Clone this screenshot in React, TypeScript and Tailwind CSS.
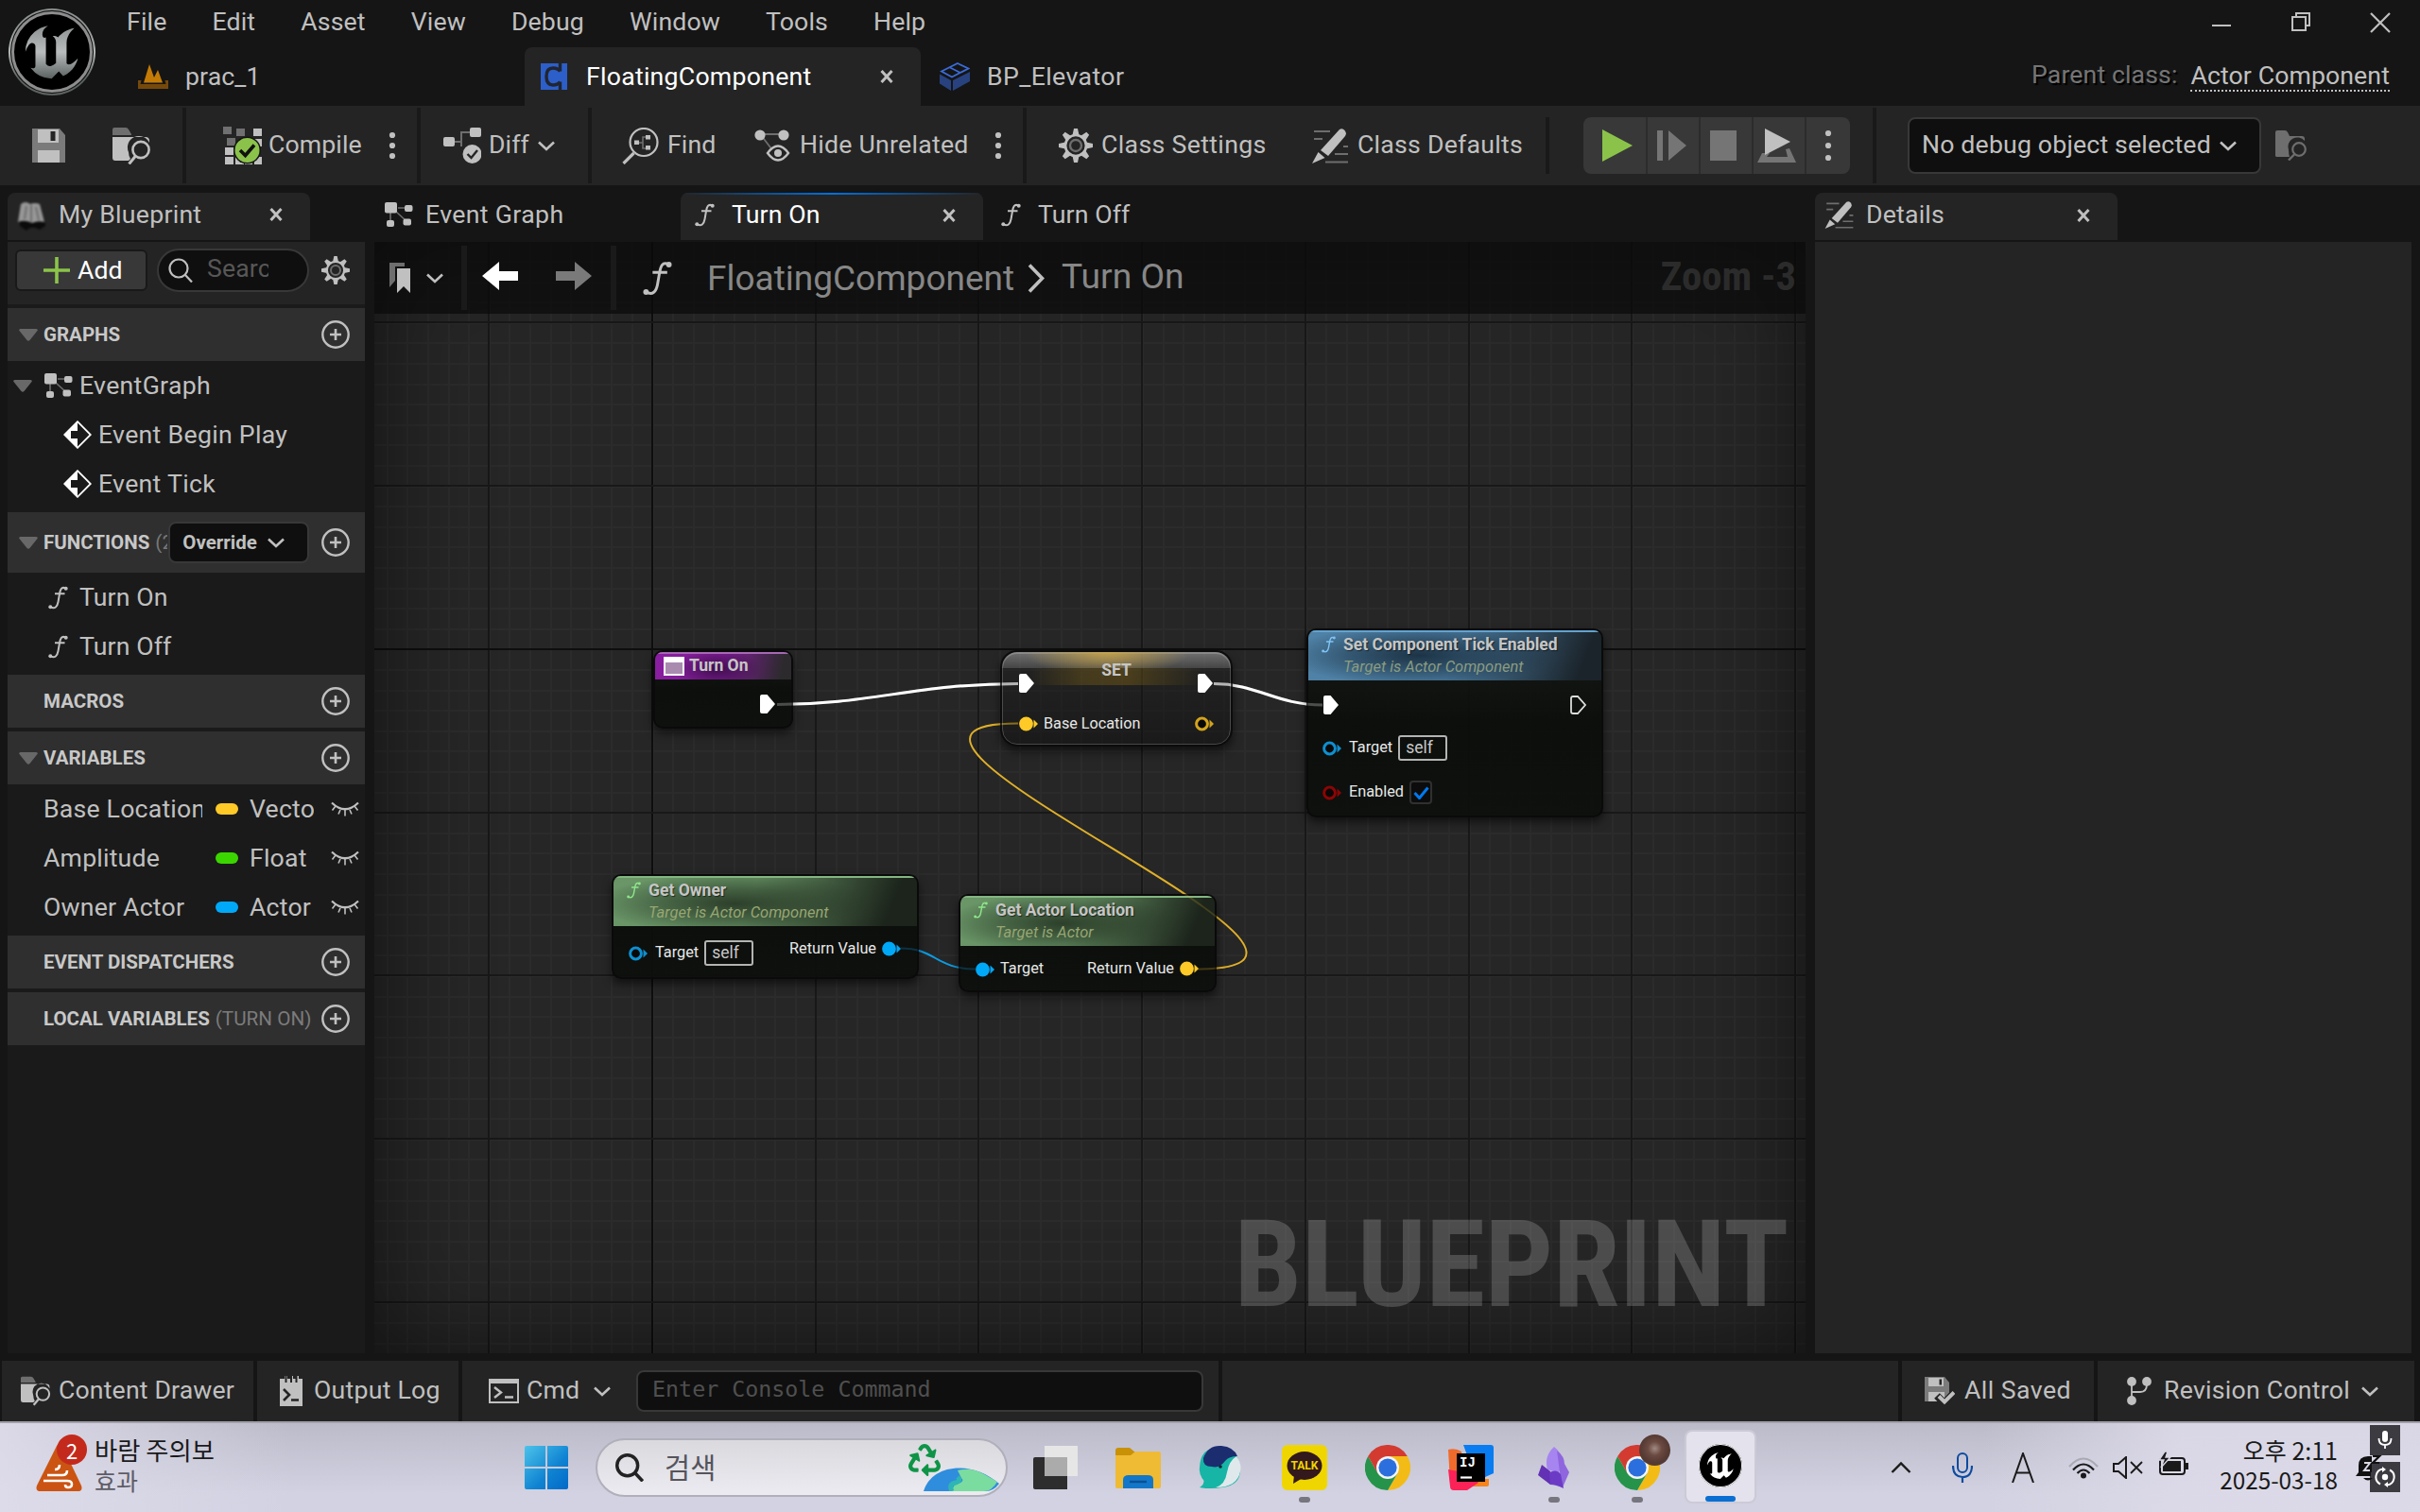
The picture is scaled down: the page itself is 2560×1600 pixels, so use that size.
import React from 'react';
import type { ReactNode } from 'react';
import { SiUnrealengine } from 'react-icons/si';
import { FaRecycle } from 'react-icons/fa';

const LIGHT = '#c0c0c0';
const DIM = '#6e6e6e';

/* ---------- icons ---------- */

type SvgProps = { w: number; h: number; className?: string; children: ReactNode; box?: string };
const Svg = ({ w, h, className, children, box }: SvgProps) => (
  <svg width={w} height={h} viewBox={box ?? `0 0 ${w} ${h}`} className={`shrink-0 ${className ?? ''}`} fill="none">
    {children}
  </svg>
);

const Chevron = ({ className }: { className?: string }) => (
  <Svg w={18} h={11} className={className}>
    <path d="M1 1.5 9 9l8-7.5" stroke={LIGHT} strokeWidth="2.6" />
  </Svg>
);

const Dots = ({ gap = 11, className }: { gap?: number; className?: string }) => (
  <Svg w={8} h={36} className={className}>
    <circle cx="4" cy={18 - gap} r="3.1" fill={LIGHT} />
    <circle cx="4" cy="18" r="3.1" fill={LIGHT} />
    <circle cx="4" cy={18 + gap} r="3.1" fill={LIGHT} />
  </Svg>
);

const Cross = ({ className }: { className?: string }) => (
  <Svg w={14} h={14} className={className}>
    <path d="M1.5 1 12.5 13M12.5 1 1.5 13" stroke={LIGHT} strokeWidth="3" />
  </Svg>
);

const FuncIcon = ({ w = 21, h = 25, color = LIGHT }: { w?: number; h?: number; color?: string }) => (
  <Svg w={w} h={h} box="0 0 21 25">
    <path d="M18.500 2.600C14 .2 12.800 4 12 8.500L10.500 17C9.600 22 7 24.800 2.500 22.400M7 8.300h10.500" stroke={color} strokeWidth="2" />
    <circle cx="18.700" cy="2.700" r="2" fill={color} />
    <circle cx="2.300" cy="22.300" r="2" fill={color} />
  </Svg>
);

const GraphIcon = () => (
  <Svg w={30} h={26}>
    <path d="M14 6h10M12 10l12 11M6 10v12" stroke={DIM} strokeWidth="1.6" />
    <rect x="0" y="0" width="13" height="11.500" rx="2" fill={LIGHT} />
    <rect x="21" y="3" width="8.500" height="7" rx="2" fill={LIGHT} />
    <rect x="19.500" y="17.500" width="8.500" height="7" rx="2" fill={LIGHT} />
    <rect x="2" y="19" width="8" height="7" rx="2" fill={LIGHT} />
  </Svg>
);

const FolderSearch = ({ w = 41, h = 39, body = LIGHT, tab = DIM }: { w?: number; h?: number; body?: string; tab?: string }) => (
  <Svg w={w} h={h} box="0 0 41 39">
    <path d="M0 8V2q0-2 2-2h12q2 0 3 2l3 5v1z" fill={tab} />
    <path d="M0 10h35q4 0 4 4v2A12 12 0 0 0 17 26q0 4 2 7l-2 2H3q-3 0-3-3z" fill={body} />
    <circle cx="30" cy="23.500" r="8.600" stroke={body} strokeWidth="2.600" />
    <path d="m24.500 30-7 8.500" stroke={body} strokeWidth="3" />
  </Svg>
);

const FolderSearchDim = () => (
  <Svg w={33} h={32}>
    <path d="M0 27V2q0-2 2-2h8q2 0 3 2l2 4h13q3 0 3 3v2A10 10 0 0 0 14 21q0 4 1 7H2q-2 0-2-1z" fill={DIM} />
    <circle cx="25" cy="20" r="6.800" stroke={DIM} strokeWidth="2.200" />
    <path d="m20.500 25-6.500 6.500" stroke={DIM} strokeWidth="2.400" />
  </Svg>
);

const SaveIcon = () => (
  <Svg w={35} h={36}>
    <path d="M0 0h29l6 7v29H0z" fill="#7b7b7b" />
    <path d="M6 1h22v14H6z" fill={LIGHT} />
    <path d="M19.500 3h5v10h-5z" fill="#242424" />
    <path d="M6 23h23v13H6z" fill={LIGHT} />
  </Svg>
);

const SavedIcon = () => (
  <Svg w={32} h={30}>
    <path d="M0 0h21l5 6v20H0z" fill="#7b7b7b" />
    <path d="M4 1h16v9H4z" fill={LIGHT} />
    <path d="M15.500 2.500h2.500v6h-2.500z" fill="#242424" />
    <path d="M4 16h17v10H4z" fill={LIGHT} />
    <path d="m13 20 8 8 11-12" stroke="#242424" strokeWidth="8" />
    <path d="m15 20.500 6 6L31 16.500" stroke={LIGHT} strokeWidth="4" />
  </Svg>
);

const CompileIcon = () => (
  <Svg w={41} h={40}>
    <g fill="#707070">
      <rect x="0" y="0" width="9" height="8" />
      <rect x="14" y="2" width="9" height="8" />
      <rect x="4" y="12" width="9" height="8" />
    </g>
    <g fill={LIGHT}>
      <rect x="32" y="2" width="9" height="8" />
      <rect x="2" y="22" width="9" height="8" />
      <rect x="2" y="32" width="9" height="8" />
      <rect x="13" y="32" width="9" height="8" />
      <rect x="23" y="32" width="8" height="8" />
      <rect x="33" y="32" width="8" height="8" />
      <rect x="32" y="13" width="9" height="8" />
    </g>
    <circle cx="25.500" cy="25" r="14.500" fill="#151515" />
    <circle cx="25.500" cy="25" r="13" fill="#8bc34a" />
    <path d="m18 25 5.500 5.500L33 19.500" stroke="#111" strokeWidth="3.600" />
  </Svg>
);

const DiffIcon = () => (
  <Svg w={40} h={38}>
    <path d="M12 15h7V5h9M19 15v5" stroke={DIM} strokeWidth="2" />
    <rect x="0" y="10" width="12" height="10" rx="2" fill={LIGHT} />
    <rect x="28" y="0" width="12" height="10" rx="2" fill={LIGHT} />
    <circle cx="30.500" cy="28" r="10" fill={LIGHT} />
    <path d="m25.500 28 4 4 6.500-8" stroke="#242424" strokeWidth="2.400" />
  </Svg>
);

const FindIcon = () => (
  <Svg w={39} h={39}>
    <circle cx="23" cy="15.500" r="14.500" stroke={LIGHT} strokeWidth="2.200" />
    <path d="M12.500 27 1.500 38" stroke={LIGHT} strokeWidth="3.200" />
    <path d="M17 16h5M28 10h-6v12h6" stroke={DIM} strokeWidth="1.600" />
    <rect x="13" y="13.500" width="5" height="4.500" fill={LIGHT} />
    <rect x="25" y="8" width="5" height="4.500" fill={LIGHT} />
    <rect x="25" y="19" width="5" height="4.500" fill={LIGHT} />
  </Svg>
);

const HideIcon = () => (
  <Svg w={38} h={34}>
    <path d="M8 5h20M7 6l13 17" stroke={DIM} strokeWidth="1.800" />
    <circle cx="6" cy="6" r="5.600" fill={LIGHT} />
    <circle cx="31" cy="6" r="5.600" fill={LIGHT} />
    <path d="M14 25q11-15 22 0-11 15-22 0z" stroke={LIGHT} strokeWidth="2.400" fill="#242424" />
    <circle cx="25" cy="25" r="4" fill={LIGHT} />
  </Svg>
);

const Gear = ({ s }: { s: number }) => (
  <Svg w={s} h={s} box="0 0 36 36">
    {[0, 45, 90, 135, 180, 225, 270, 315].map((a) => (
      <path key={a} d="M16 0h4l1.500 7h-7z" fill={LIGHT} transform={`rotate(${a} 18 18)`} />
    ))}
    <circle cx="18" cy="18" r="11" stroke={LIGHT} strokeWidth="2.700" />
    <circle cx="18" cy="18" r="6" stroke={DIM} strokeWidth="2.400" />
  </Svg>
);

const PencilIcon = ({ w = 38, h = 37 }: { w?: number; h?: number }) => (
  <Svg w={w} h={h} box="0 0 38 37">
    <path d="M2 3h17M2 11h9M33 19h5M24 27h14M14 35.500h24" stroke={DIM} strokeWidth="2" />
    <path d="M29 1q3-2 5.500 1t.5 6L17 29l-8-6z" fill={LIGHT} />
    <path d="m6.500 25 7 6L0 37z" fill={LIGHT} />
  </Svg>
);

const PlusCircle = () => (
  <Svg w={30} h={30}>
    <circle cx="15" cy="15" r="13.700" stroke={LIGHT} strokeWidth="2.400" />
    <path d="M15 9v12M9 15h12" stroke={LIGHT} strokeWidth="2.600" />
  </Svg>
);

const Tri = () => (
  <Svg w={20} h={13}>
    <path d="M1.500 0h17q2 .6 1 2l-8 10q-1.500 1.500-3 0l-8-10q-1-1.400 1-2z" fill="#686868" />
  </Svg>
);

const EventIcon = () => (
  <Svg w={30} h={30}>
    <path d="M15 1.200 28.800 15 15 28.800 1.200 15z" stroke="#fff" strokeWidth="1.800" />
    <path d="M15 1v10H8v8h7v10L1 15z" fill="#fff" />
  </Svg>
);

const EyeShut = () => (
  <Svg w={30} h={16}>
    <path d="M1 1.500Q15 15 29 1.500" stroke={LIGHT} strokeWidth="2.200" />
    <path d="M5 5 1.500 9.500M10 9l-2 4.500M15 9v6.500M20 9l2 4.500M25 5l3.500 4.500" stroke={LIGHT} strokeWidth="1.600" />
  </Svg>
);

const TerrainIcon = () => (
  <Svg w={32} h={26}>
    <path d="M6 19.500 12 0l5 14 4-8 5 13.500z" fill="#c37b06" />
    <path d="M0 17h3.500L2.500 21h27l-1-4H32v9H0z" fill="#76490b" />
  </Svg>
);

const BlueClassIcon = () => (
  <Svg w={28} h={28}>
    <path d="M0 0h28v28H0z" fill="#2c5fc9" />
    <path d="M20.500 0v8.500M20.500 19.500V28M20.500 8.500Q18 5 13 5 6 5 6 14t7 9q5 0 7.500-3.500" stroke="#202531" strokeWidth="3.400" />
  </Svg>
);

const CubeIcon = () => (
  <Svg w={32} h={30}>
    <path d="M19 1 30.500 6.500 13 15.500 2 9.500zM11 5.500l11 5.500" stroke="#3a6bd8" strokeWidth="1.800" />
    <path d="M0 12.500 12 19v11L0 22.500zM14 19l18-9v10L14 30z" fill="#28427f" />
  </Svg>
);

const BookIcon = () => (
  <Svg w={32} h={32} className="blur-[0.8px]">
    <path d="M3 20h26l1 6-6 4q-9-5-14 1l-7-5z" fill="#0b0b0b" />
    <path d="M1 22 4 3q5-4 10 0 5-2 10 0l5 19q-7-2-13 1-8-4-15-1z" fill="#979797" />
    <path d="m10 5-2 14M20 6l3 14M15 4v18" stroke="#6f6f6f" strokeWidth="2" />
  </Svg>
);

const Magnifier = ({ s, color, sw = 2.600 }: { s: number; color: string; sw?: number }) => (
  <Svg w={s} h={s} box="0 0 26 26">
    <circle cx="11" cy="11" r="9.500" stroke={color} strokeWidth={sw} />
    <path d="m18 18 7 7.500" stroke={color} strokeWidth={sw} />
  </Svg>
);

/* ---------- title area ---------- */

const Title = () => (
  <header className="flex h-[112px] shrink-0">
    <div className="ml-3 mt-3 size-[86px] shrink-0 rounded-full border-[3px] border-[#8d8d8d] bg-black">
      <SiUnrealengine size={92} fill="url(#steel)" className="-ml-1.5 -mt-1.5" />
      <svg width="0" height="0">
        <defs>
          <linearGradient id="steel" x1="0" y1="0" x2="0" y2="1">
            <stop offset="0.2" stopColor="#8e9292" />
            <stop offset="0.5" stopColor="#b9bcbd" />
            <stop offset="0.8" stopColor="#5d6363" />
          </linearGradient>
        </defs>
      </svg>
    </div>
    <div className="flex flex-1 flex-col">
      <div className="flex h-[50px] items-center pl-[12px]">
        {['File', 'Edit', 'Asset', 'View', 'Debug', 'Window', 'Tools', 'Help'].map((m) => (
          <span key={m} className="px-6 pb-[3px] tracking-[0.15px]">{m}</span>
        ))}
        <div className="ml-auto flex items-center pr-[31px]">
          <Svg w={20} h={4} className="mt-1"><path d="M0 2h20" stroke={LIGHT} strokeWidth="2" /></Svg>
          <Svg w={20} h={20} className="ml-16 -mt-1">
            <path d="M1 5h14v14H1zM5 5V1h14v13h-4" stroke={LIGHT} strokeWidth="2" />
          </Svg>
          <Svg w={22} h={22} className="ml-[63px] -mt-0.5"><path d="m1 1 20 20M21 1 1 21" stroke={LIGHT} strokeWidth="2.200" /></Svg>
        </div>
      </div>
      <div className="flex h-[62px] items-center">
        <div className="flex w-[457px] items-center pl-12">
          <TerrainIcon />
          <span className="ml-[18px]">prac_1</span>
        </div>
        <div className="flex h-full w-[419px] items-center rounded-t-lg bg-[#242424] pl-[17px] text-white">
          <BlueClassIcon />
          <span className="ml-[20px] tracking-[0.25px]">FloatingComponent</span>
          <Cross className="ml-auto mr-[29px]" />
        </div>
        <div className="flex items-center pl-5">
          <CubeIcon />
          <span className="ml-[18px] tracking-[0.4px]">BP_Elevator</span>
        </div>
        <span className="ml-auto pb-1 text-[#757575] [text-shadow:2px_2px_1px_#000]">Parent class:</span>
        <span className="ml-[14px] mr-8 border-b-2 border-dotted border-[#c0c0c0] leading-[30px]">Actor Component</span>
      </div>
    </div>
  </header>
);

/* ---------- main toolbar ---------- */

const Sep = ({ short }: { short?: boolean }) =>
  short ? <div className="h-[60px] w-1 self-center bg-[#191919]" /> : <div className="my-0.5 w-1 self-stretch bg-[#191919]" />;

const Toolbar = () => (
  <div className="flex h-[84px] shrink-0 items-center bg-[#242424]">
    <div className="flex w-[193px] items-center pl-[34px]">
      <SaveIcon />
      <div className="ml-[50px]"><FolderSearch /></div>
    </div>
    <Sep />
    <div className="flex w-[244px] items-center pl-[39px] pr-[22px]">
      <CompileIcon />
      <span className="ml-[7px] pb-px">Compile</span>
      <Dots className="ml-auto" />
    </div>
    <Sep />
    <div className="flex w-[177px] items-center pl-6 pr-[35px]">
      <DiffIcon />
      <span className="ml-2 pb-px">Diff</span>
      <Chevron className="ml-auto" />
    </div>
    <Sep />
    <div className="flex w-[456px] items-center pl-8 pr-[22px]">
      <div className="flex w-[140px] items-center gap-[9px]"><FindIcon /><span className="pb-px">Find</span></div>
      <HideIcon />
      <span className="ml-[10px] pb-px tracking-[0.25px]">Hide Unrelated</span>
      <Dots className="ml-auto" />
    </div>
    <Sep />
    <div className="flex w-[549px] items-center pl-[34px]">
      <div className="flex w-[268px] items-center gap-[9px]"><Gear s={36} /><span className="pb-px tracking-[0.35px]">Class Settings</span></div>
      <div className="flex items-center gap-[10px]"><PencilIcon /><span className="pb-px tracking-[0.25px]">Class Defaults</span></div>
    </div>
    <Sep short />
    <div className="flex w-[342px] pl-9">
      <div className="flex h-[60px] w-[282px] divide-x-2 divide-[#2c2c2c] overflow-hidden rounded-lg bg-[#383838]">
        <div className="flex w-[68px] items-center pl-5">
          <Svg w={32} h={34}><path d="M0 0l32 17L0 34z" fill="#8bc34a" /></Svg>
        </div>
        <div className="flex w-14 items-center pl-[10px]">
          <Svg w={31} h={32}><path d="M0 0h6v32H0zM12 0l19 16-19 16z" fill="#757575" /></Svg>
        </div>
        <div className="flex w-14 items-center pl-[10px]"><div className="h-8 w-7 bg-[#757575]" /></div>
        <div className="flex w-14 items-center pl-[4px]">
          <Svg w={41} h={36}>
            <path d="M5 26h8l-3 4h22l-2-8 4-1 7 15H0z" fill="#757575" />
            <path d="M8 0l27 14L8 28z" fill={LIGHT} />
          </Svg>
        </div>
        <div className="flex flex-1 items-center justify-center"><Dots gap={13} /></div>
      </div>
    </div>
    <Sep />
    <div className="flex items-center pl-[33px]">
      <div className="flex h-[60px] w-[374px] items-center rounded-lg border-2 border-[#383838] bg-[#0f0f0f] pl-[13px]">
        <span className="pb-px tracking-[0.18px]">No debug object selected</span>
        <Chevron className="ml-[9px]" />
      </div>
      <div className="ml-[15px]"><FolderSearchDim /></div>
    </div>
  </div>
);

/* ---------- panel tabs ---------- */

const PanelTabs = () => (
  <div className="mt-2 flex h-[50px] shrink-0 items-center">
    <div className="ml-2 flex h-full w-80 items-center rounded-t-lg bg-[#242424] pl-[10px] pr-[29px]">
      <BookIcon />
      <span className="ml-3 pb-[3px] tracking-[0.25px]">My Blueprint</span>
      <Cross className="mb-1 ml-auto" />
    </div>
    <div className="flex w-[392px] items-center pb-[3px] pl-[79px]">
      <GraphIcon />
      <span className="ml-[13px] tracking-[0.35px]">Event Graph</span>
    </div>
    <div className="flex h-full w-80 flex-col overflow-hidden rounded-t-lg bg-[#242424] text-white">
      <div className="h-0.5 bg-[linear-gradient(90deg,#242424,#0070e0_50%,#242424)]" />
      <div className="flex flex-1 items-center pb-[5px] pl-[15px] pr-[29px]">
        <FuncIcon />
        <span className="ml-[18px]">Turn On</span>
        <Cross className="ml-auto" />
      </div>
    </div>
    <div className="flex w-[880px] items-center pb-[3px] pl-[19px]">
      <FuncIcon />
      <span className="ml-[18px]">Turn Off</span>
    </div>
    <div className="flex h-full w-80 items-center rounded-t-lg bg-[#242424] pb-[3px] pl-[10px] pr-[29px]">
      <PencilIcon w={31} h={29} />
      <span className="ml-[13px] tracking-[0.2px]">Details</span>
      <Cross className="ml-auto" />
    </div>
  </div>
);

/* ---------- my blueprint panel ---------- */

const Head = ({ title, open, children, tall }: { title: string; open?: boolean; children?: ReactNode; tall?: boolean }) => (
  <div className={`mt-1 flex items-center bg-[#2f2f2f] pl-3 pr-4 ${tall ? 'h-16' : 'h-14'}`}>
    <div className="w-[26px]">{open && <Tri />}</div>
    <span className="shrink-0 text-[20.5px] font-bold tracking-normal text-[#c8c8c8]">{title}</span>
    {children}
    <div className="ml-auto"><PlusCircle /></div>
  </div>
);

const Var = ({ name, type, dot }: { name: string; type: string; dot: string }) => (
  <div className="flex h-[52px] items-center pl-[38px] pr-1.5">
    <span className="w-[168px] overflow-hidden whitespace-nowrap py-1 tracking-[0.2px]">{name}</span>
    <span className={`ml-3.5 h-3 w-6 rounded-md ${dot}`} />
    <span className="ml-3 w-[68px] overflow-hidden whitespace-nowrap py-1 tracking-[0.2px]">{type}</span>
    <div className="ml-auto"><EyeShut /></div>
  </div>
);

const LeftPanel = () => (
  <aside className="ml-2 flex w-[378px] shrink-0 flex-col bg-[#1a1a1a]">
    <div className="flex h-[66px] items-center bg-[#242424] pb-1.5 pl-2">
      <div className="flex h-[44px] w-[140px] items-center rounded-md border-2 border-[#191919] bg-[#383838] pl-7 text-white">
        <Svg w={28} h={28}><path d="M14 0v28M0 14h28" stroke="#8bc34a" strokeWidth="3.600" /></Svg>
        <span className="ml-2">Add</span>
      </div>
      <div className="ml-2.5 flex h-[46px] w-[161px] items-center rounded-full border-2 border-[#383838] bg-[#0f0f0f] pl-[10px]">
        <Magnifier s={26} color={LIGHT} sw={2.200} />
        <span className="ml-[15px] w-[65px] overflow-hidden whitespace-nowrap pb-1 text-[#575757]">Search</span>
      </div>
      <div className="ml-[13px]"><Gear s={30} /></div>
    </div>
    <Head title="GRAPHS" open />
    <div className="flex h-[52px] items-center pl-1.5">
      <Tri />
      <div className="ml-[13px]"><GraphIcon /></div>
      <span className="ml-[7px] tracking-[0.3px]">EventGraph</span>
    </div>
    <div className="flex h-[52px] items-center pl-[59px]"><EventIcon /><span className="ml-[7px] tracking-[0.3px]">Event Begin Play</span></div>
    <div className="flex h-[52px] items-center pl-[59px]"><EventIcon /><span className="ml-[7px] tracking-[0.3px]">Event Tick</span></div>
    <Head title="FUNCTIONS" open tall>
      <span className="ml-1.5 w-[13px] shrink-0 overflow-hidden whitespace-nowrap text-[21px] text-[#777]">(2)</span>
      <div className="ml-px flex h-11 w-[149px] shrink-0 items-center rounded-lg border-2 border-[#383838] bg-[#0f0f0f] pl-[13px]">
        <span className="text-[20.5px] font-bold tracking-normal">Override</span>
        <Chevron className="ml-[11px]" />
      </div>
    </Head>
    <div className="flex h-[52px] items-center pl-[43px]"><FuncIcon /><span className="ml-3">Turn On</span></div>
    <div className="flex h-[52px] items-center pl-[43px]"><FuncIcon /><span className="ml-3">Turn Off</span></div>
    <Head title="MACROS" />
    <Head title="VARIABLES" open />
    <Var name="Base Location" type="Vector" dot="bg-[#ffc927]" />
    <Var name="Amplitude" type="Float" dot="bg-[#3bd600]" />
    <Var name="Owner Actor" type="Actor" dot="bg-[#00a8f8]" />
    <Head title="EVENT DISPATCHERS" />
    <Head title="LOCAL VARIABLES">
      <span className="ml-[6px] text-[20.700px] tracking-normal text-[#7b7b7b]">(TURN ON)</span>
    </Head>
  </aside>
);

/* ---------- graph ---------- */

const range = (n: number) => Array.from({ length: n }, (_, i) => i);

const Grid = () => (
  <svg width="1514" height="1176" className="absolute inset-0" shapeRendering="crispEdges">
    {range(71).map((i) => <rect key={`v${i}`} x={Math.round(-8.8 + i * 21.6)} y="0" width="2" height="1176" fill="#2b2b2b" />)}
    {range(56).map((i) => <rect key={`h${i}`} x="0" y={Math.round(-1.6 + i * 21.6)} width="1514" height="2" fill="#2b2b2b" />)}
    {range(9).map((i) => <rect key={`V${i}`} x={Math.round(120.1 + i * 172.75)} y="0" width="2" height="1176" fill={i === 1 ? '#0e0e0e' : '#181818'} />)}
    {range(7).map((i) => <rect key={`H${i}`} x="0" y={Math.round(84.300 + i * 172.75)} width="1514" height="2" fill={i === 2 ? '#0e0e0e' : '#181818'} />)}
  </svg>
);

const Wires = ({ className }: { className?: string }) => (
  <svg width="1514" height="1176" viewBox="396 256 1514 1176" className={`pointer-events-none absolute inset-0 ${className ?? ''}`} fill="none">
    <path d="M822 745.500C920 745.500 970 723.500 1077 723.500" stroke="#fff" strokeWidth="3" />
    <path d="M1284 723.500C1330 723.500 1350 746 1399 746" stroke="#fff" strokeWidth="3" />
    <path d="M1266 1025.500C1504 1025.500 843 765.500 1077 765.500" stroke="#e0b02a" strokeWidth="1.900" />
    <path d="M953 1003.500C990 1003.500 990 1025.500 1032 1025.500" stroke="#0e9be0" strokeWidth="1.900" />
  </svg>
);

const Exec = ({ hollow }: { hollow?: boolean }) => (
  <Svg w={17} h={20}>
    <path
      d={hollow ? 'M1 3q0-2 2-2h5l8 9-8 9H3q-2 0-2-2z' : 'M0 2q0-2 2-2h5.500L16 10l-8.500 10H2q-2 0-2-2z'}
      fill={hollow ? 'none' : '#fff'}
      stroke={hollow ? '#ddd' : 'none'}
      strokeWidth="1.800"
    />
  </Svg>
);

const Pin = ({ color, hollow }: { color: string; hollow?: boolean }) => (
  <Svg w={20} h={16}>
    <path d="M15.500 3.500 20 8l-4.500 4.500z" fill={color} />
    <circle cx="7.500" cy="8" r={hollow ? 5.900 : 7.400} fill={hollow ? '#080808' : color} stroke={hollow ? color : 'none'} strokeWidth="3" />
  </Svg>
);

const Self = ({ className }: { className?: string }) => (
  <span className={`flex h-[27px] w-[52px] items-center rounded-[3px] border-2 border-[#b4b4b4] pl-1.5 text-[17.500px] text-[#c8c8c8] ${className}`}>self</span>
);

const nodeBase =
  'absolute flex flex-col overflow-hidden rounded-[10px] border-2 border-[#0a0a0a] bg-[linear-gradient(180deg,rgba(20,24,20,0.88),rgba(10,13,10,0.93)_50%,rgba(12,15,12,0.93))] shadow-[0_5px_10px_rgba(0,0,0,0.55)]';

const headGreen =
  'shadow-[inset_0_2px_0_#83b681] bg-[radial-gradient(ellipse_46%_60%_at_40%_55%,rgba(38,54,36,0.9),rgba(38,54,36,0.5)_50%,transparent),linear-gradient(112deg,#6a9668_0%,#648f62_45%,#1c241b_90%)]';
const headBlue =
  'shadow-[inset_0_2px_0_#62a3cf] bg-[radial-gradient(ellipse_46%_60%_at_38%_50%,rgba(24,44,60,0.9),rgba(24,44,60,0.5)_50%,transparent),linear-gradient(112deg,#5083a8_0%,#4a7a9e_50%,#1b242b_92%)]';

const NodeHead = ({ title, sub, icon, head, subColor }: { title: string; sub: string; icon: string; head: string; subColor: string }) => (
  <div className={`flex h-[53px] shrink-0 pl-[14px] pt-[6px] ${head}`}>
    <FuncIcon w={15} h={18} color={icon} />
    <div className="-mt-px ml-2 flex flex-col">
      <span className="text-[17.500px] font-bold leading-[20px] text-[#c6c6c6] [text-shadow:1px_1px_1px_#0008]">{title}</span>
      <span className={`pt-1 text-[16.450px] italic leading-[20px] ${subColor}`}>{sub}</span>
    </div>
  </div>
);

const Graph = () => (
  <main className="relative ml-2.5 w-[1514px] shrink-0 overflow-hidden bg-[#262626] tracking-normal">
    <Grid />
    <div className="absolute inset-0 shadow-[inset_0_0_110px_rgba(0,0,0,0.55)]" />
    <div className="absolute bottom-[19px] right-[18px] text-[128px] font-bold leading-[150px] tracking-[-0.55px] text-white/18 [font-stretch:75%]">BLUEPRINT</div>
    <Wires />

    <div className={`${nodeBase} left-[295px] top-[432px] h-[83px] w-[148px]`}>
      <div className="flex h-[29px] items-center bg-[radial-gradient(ellipse_32%_70%_at_45%_60%,rgba(50,10,62,0.85),transparent),linear-gradient(100deg,#8a1ea0_0%,#7f1d96_50%,#2d2a2e_92%)] pl-[9px] shadow-[inset_0_2px_0_#a768b5]">
        <div className="h-[20px] w-[22px] border-2 border-t-[6px] border-white bg-[#a98bb0]" />
        <span className="ml-[5px] text-[17.500px] font-bold text-[#c6c6c6]">Turn On</span>
      </div>
      <div className="flex justify-end pr-[16px] pt-[16px]"><Exec /></div>
    </div>

    <div className="absolute left-[662px] top-[432px] flex h-[102px] w-[246px] flex-col overflow-hidden rounded-[18px] border-2 border-[#0c0c0c] bg-[linear-gradient(180deg,rgba(30,30,30,0.3),rgba(16,18,16,0.6))] shadow-[0_5px_10px_rgba(0,0,0,0.55)]">
      <div className="absolute inset-0 rounded-[16px] border border-white/20 shadow-[inset_0_1px_0_rgba(255,255,255,0.25)]" />
      <div className="absolute inset-x-0 top-0 h-[17px] bg-[radial-gradient(ellipse_36%_150%_at_46%_0%,rgba(206,168,70,0.85),transparent),linear-gradient(180deg,rgba(190,190,190,0.5),rgba(150,150,150,0.3))]" />
      <div className="absolute inset-x-0 top-[17px] h-[18px] bg-[linear-gradient(90deg,transparent_12%,rgba(150,115,20,0.3)_35%,rgba(150,115,20,0.35)_55%,transparent_88%)]" />
      <div className="relative mt-2 h-[20px] text-center text-[17.500px] font-bold leading-[22px] text-[#c6c6c6]">SET</div>
      <div className="relative -mt-[5px] flex justify-between px-[18px]"><Exec /><Exec /></div>
      <div className="relative mt-[23px] flex items-center px-[18px] text-[16.200px] leading-[19px] text-[#e8e8e8]">
        <Pin color="#ffc927" /><span className="ml-[6px]">Base Location</span>
        <div className="ml-auto"><Pin color="#d3a31f" hollow /></div>
      </div>
    </div>

    <div className={`${nodeBase} left-[986px] top-[409px] h-[200px] w-[314px] text-[16.300px] text-[#e8e8e8]`}>
      <NodeHead title="Set Component Tick Enabled" sub="Target is Actor Component" icon="#7fc4f5" head={headBlue} subColor="text-[#8b9c80]" />
      <div className="flex justify-between pl-[16px] pr-[16px] pt-[16px]"><Exec /><Exec hollow /></div>
      <div className="mt-[22px] flex h-[27px] items-center pl-[15px]">
        <Pin color="#0e8fd0" hollow /><span className="ml-[8px]">Target</span><Self className="ml-[6px]" />
      </div>
      <div className="mt-[20px] flex h-[27px] items-center pl-[15px]">
        <Pin color="#8b0505" hollow /><span className="ml-[8px]">Enabled</span>
        <div className="ml-[6px] flex h-[25px] w-[24px] items-center justify-center rounded-[4px] border-2 border-[#303030] bg-[#0c0c0c]">
          <Svg w={17} h={14}><path d="m1.500 7 5 5.500L15.500 1.500" stroke="#0078f0" strokeWidth="3" /></Svg>
        </div>
      </div>
    </div>

    <div className={`${nodeBase} left-[251px] top-[669px] h-[111px] w-[325px] text-[16.300px] text-[#e8e8e8]`}>
      <NodeHead title="Get Owner" sub="Target is Actor Component" icon="#8fe58c" head={headGreen} subColor="text-[#98a673]" />
      <div className="mt-[15px] flex h-[27px] items-center pl-[16px] pr-[17px]">
        <Pin color="#0e8fd0" hollow /><span className="ml-[8px]">Target</span><Self className="ml-[6px]" />
        <div className="-mt-2 ml-auto flex items-center"><span className="mr-[6px]">Return Value</span><Pin color="#00a8f8" /></div>
      </div>
    </div>

    <div className={`${nodeBase} left-[618px] top-[690px] h-[104px] w-[273px] text-[16.300px] text-[#e8e8e8]`}>
      <NodeHead title="Get Actor Location" sub="Target is Actor" icon="#8fe58c" head={headGreen} subColor="text-[#98a673]" />
      <div className="mt-[11px] flex h-[27px] items-center pl-[16px] pr-[17px]">
        <Pin color="#00a8f8" /><span className="ml-[6px]">Target</span>
        <div className="ml-auto flex items-center"><span className="mr-[6px]">Return Value</span><Pin color="#ffc927" /></div>
      </div>
    </div>

    <Wires className="opacity-20" />

    <div className="relative flex h-[76px] items-center bg-[#0b0b0b]/75">
      <Svg w={22} h={32} className="ml-4">
        <path d="M0 0h16v4H6v15l-6 7z" fill={DIM} />
        <path d="M8 6h14v26l-7-7-7 7z" fill={LIGHT} />
      </Svg>
      <Chevron className="ml-[17px]" />
      <div className="ml-[19px] h-[68px] w-1.5 bg-[#1a1a1a]" />
      <Svg w={38} h={30} className="-mt-1 ml-4"><path d="M0 15 18 0v10h20v10H18v10z" fill="#fff" /></Svg>
      <Svg w={38} h={30} className="-mt-1 ml-10"><path d="M38 15 20 0v10H0v10h20v10z" fill="#7a7a7a" /></Svg>
      <div className="ml-5 h-[68px] w-1.5 bg-[#1a1a1a]" />
      <div className="ml-[28px]"><FuncIcon w={31} h={37} /></div>
      <span className="ml-[37px] text-[37px] text-[#878787]">FloatingComponent</span>
      <Svg w={20} h={31} className="ml-[13px]"><path d="M3 1.500 16.500 15.500 3 29.500" stroke={LIGHT} strokeWidth="3.600" /></Svg>
      <span className="ml-[17px] pb-[3px] text-[37.200px] text-[#878787]">Turn On</span>
      <span className="ml-auto pb-[4px] pr-[10px] text-[42.700px] font-bold text-[#2b2b2b] [font-stretch:75%]">Zoom -3</span>
    </div>
  </main>
);

/* ---------- status bar ---------- */

const StatusBar = () => (
  <div className="mt-2 flex h-16 shrink-0 items-stretch gap-1 pl-0.5 pr-1.5">
    <div className="flex w-[266px] items-center bg-[#242424] pl-5">
      <FolderSearch w={32} h={32} />
      <span className="ml-[8px] pb-0.5 tracking-[0.15px]">Content Drawer</span>
    </div>
    <div className="flex w-[213px] items-center bg-[#242424] pl-6">
      <Svg w={24} h={32}>
        <path d="M0 3h24v29H0zM5 0h3v3H5zM11 0h3v3h-3zM17 0h3v3h-3z" fill={LIGHT} />
        <path d="M6.500 0v7M12 0v7M17.500 0v7" stroke="#242424" strokeWidth="2" />
        <path d="m4 14 6 6-6 6M12 25.500h8" stroke="#242424" strokeWidth="2.600" />
      </Svg>
      <span className="ml-[12px] pb-0.5 tracking-[0.25px]">Output Log</span>
    </div>
    <div className="flex w-[800px] items-center bg-[#242424] pl-7">
      <Svg w={32} h={26}>
        <path d="M0 0h32v26H0z" fill={LIGHT} />
        <path d="M2 5h28v19H2z" fill="#242424" />
        <path d="m6 9 7 5.500L6 20M17 19.500h9" stroke={LIGHT} strokeWidth="2.400" />
      </Svg>
      <span className="ml-2 pb-0.5">Cmd</span>
      <Chevron className="ml-[15px]" />
      <div className="ml-[27px] flex h-[44px] w-[600px] items-center rounded-lg border-2 border-[#383838] bg-[#0f0f0f] pb-1 pl-[15px] font-['DejaVu_Sans_Mono',monospace] text-[23.300px] tracking-normal text-[#4f4f4f]">
        Enter Console Command
      </div>
    </div>
    <div className="flex-1 bg-[#242424]" />
    <div className="flex w-[203px] items-center bg-[#242424] pl-[24px]">
      <SavedIcon />
      <span className="ml-[10px] pb-0.5 tracking-[0.45px]">All Saved</span>
    </div>
    <div className="flex w-[335px] items-center bg-[#242424] pl-[31px]">
      <Svg w={26} h={30}>
        <path d="M5 5v20M5 16h9q7 0 7-8V5" stroke={LIGHT} strokeWidth="1.800" />
        <circle cx="5" cy="5" r="4.900" fill={LIGHT} /><circle cx="21" cy="5" r="4.900" fill={LIGHT} /><circle cx="5" cy="25" r="4.900" fill={LIGHT} />
      </Svg>
      <span className="ml-[13px] pb-0.5 tracking-[0.25px]">Revision Control</span>
      <Chevron className="ml-[12px]" />
    </div>
  </div>
);

/* ---------- windows taskbar ---------- */

const Chrome = () => (
  <Svg w={48} h={48}>
    <path d="M24 24 3.200 12A24 24 0 0 1 44.800 12z" fill="#d43b30" />
    <path d="M24 12h20.800A24 24 0 0 1 24 48L34.400 30z" fill="#f3bb16" />
    <path d="M13.600 30 3.200 12A24 24 0 0 0 24 48L34.400 30z" fill="#25934a" />
    <path d="M3.200 12 13.600 30 24 12z" fill="#d43b30" />
    <circle cx="24" cy="24" r="12" fill="#f4f4f6" />
    <circle cx="24" cy="24" r="9.600" fill="#2a6fdd" />
  </Svg>
);

const Slot = ({ children, w, mark }: { children: ReactNode; w: string; mark?: boolean }) => (
  <div className={`relative flex h-full shrink-0 items-center justify-center ${w}`}>
    {children}
    {mark && <div className="absolute bottom-[10px] h-1.5 w-3 rounded-full bg-[#77767f]" />}
  </div>
);

const Taskbar = () => (
  <footer className="flex h-24 shrink-0 items-center border-t-2 border-[#a2a1ab] bg-[linear-gradient(90deg,rgba(222,220,234,0.9),rgba(210,210,224,0)_12%,rgba(210,210,224,0)_82%,rgba(220,218,232,0.9)_90%),linear-gradient(180deg,#bcbbca,#d2d2e2_80%)] font-['Noto_Sans_CJK_KR',sans-serif] tracking-normal text-[#1a1a1a]">
    <div className="flex w-[555px] items-center pl-[38px]">
      <div className="relative">
        <Svg w={49} h={50}>
          <path d="M22 2q3-4 6 0l20 42q2 6-4 6H5q-6 0-4-6z" fill="#cb5413" />
          <path d="M12 33h16q5 0 5-5M8 39h25q5 0 5 3.500t-4 3.500q-3 0-3-3M20 27q5 0 5-5" stroke="#fff" strokeWidth="2.600" />
        </Svg>
        <div className="absolute -top-2.5 left-[22px] flex size-8 items-center justify-center rounded-full bg-[#c42a1c] text-[22px] leading-none text-white">2</div>
      </div>
      <div className="-mt-[7px] ml-[13px] flex flex-col text-[26.300px] leading-8">
        <span>바람 주의보</span>
        <span className="text-[25px] text-[#5d5c66]">효과</span>
      </div>
    </div>
    <Svg w={46} h={46}>
      <defs>
        <linearGradient id="win" x1="0" y1="0" x2="1" y2="1"><stop stopColor="#4cc3ea" /><stop offset="0.600" stopColor="#0f83d2" /><stop offset="1" stopColor="#0269c8" /></linearGradient>
      </defs>
      <path d="M2 0h20v22H0V2q0-2 2-2zM24 0h20q2 0 2 2v20H24zM0 24h22v22H2q-2 0-2-2zM24 24h22v20q0 2-2 2H24z" fill="url(#win)" />
    </Svg>
    <div className="ml-[29px] flex h-[62px] w-[436px] items-center overflow-hidden rounded-full border-2 border-[#b0afba] bg-[linear-gradient(180deg,#d9d9de,#ecebf1)] pl-[19px]">
      <Magnifier s={30} color="#222" sw={3} />
      <span className="ml-[22px] pb-[3px] text-[29.500px] leading-none text-[#55545c]">검색</span>
      <div className="relative ml-auto mr-[7px] h-[50px] w-[96px]">
        <Svg w={96} h={50}>
          <path d="M16 50C24 22 66 16 96 42q-6 8-14 8z" fill="#2f8ddd" />
          <path d="M52 28q14-4 28 4l14 8q-6 10-14 10H46q2-8 6-8 8-2 4-6z" fill="#7bdca0" />
          <path d="M46 50q-4-8 4-9 6-2 2-6" stroke="#2fb6b4" strokeWidth="5" />
        </Svg>
        <FaRecycle size={34} color="#0f9447" className="absolute left-0 top-0" />
      </div>
    </div>
    <div className="ml-[6px] flex h-full">
      <Slot w="w-[88px]">
        <Svg w={47} h={46}>
          <path d="M2 12h34v34H2q-2 0-2-2V14q0-2 2-2z" fill="#2d2d2d" />
          <path d="M12 0h35v32H12z" fill="#e6e6e6" />
          <path d="M12 12h24v20H12z" fill="#ababab" />
        </Svg>
      </Slot>
      <Slot w="w-[88px]">
        <Svg w={48} h={44}>
          <path d="M0 4q0-3 3-3h12l6 5v6H0z" fill="#c99106" />
          <path d="M0 9h16l5-4h25q2 0 2 2v35q0 2-2 2H2q-2 0-2-2z" fill="#efbb34" />
          <path d="M8 44V35q0-5 6-5h20q6 0 6 5v9z" fill="#1277c9" />
          <path d="M15 37h18" stroke="#0b5091" strokeWidth="2.400" />
        </Svg>
      </Slot>
      <Slot w="w-[88px]">
        <Svg w={45} h={48} className="-ml-1">
          <path d="M1 24Q2 6 14 4h16q14 6 14 22 0 17-19 19-12 2-24 0 6-4 4-8-5-6-4-13z" fill="#17b5a5" />
          <path d="M40 12q6 8 4 16-3 17-26 17 10-3 12-16Q32 17 40 12z" fill="#dfe9ec" />
          <path d="M5 14Q10 0 24 1q13 1 17 11-9 0-13 5-6 8-14 6-10 0-9-9z" fill="#1b2d6f" />
          <circle cx="23" cy="23" r="1.800" fill="#123" />
        </Svg>
      </Slot>
      <Slot w="w-[88px]" mark>
        <div className="relative flex size-12 items-center justify-center rounded-md bg-[#efd600]">
          <Svg w={38} h={36}>
            <ellipse cx="19" cy="16" rx="18.500" ry="15" fill="#33191b" />
            <path d="m8 26-1 9 10-6z" fill="#33191b" />
          </Svg>
          <span className="absolute -mt-1 font-['Roboto'] text-[12px] font-bold leading-none text-[#efd600]">TALK</span>
        </div>
      </Slot>
      <Slot w="w-[88px]"><Chrome /></Slot>
      <Slot w="w-[88px]">
        <div className="relative">
          <Svg w={48} h={48}>
            <path d="M16 0h29q3 0 3 3v27L30 38z" fill="#087cf0" />
            <path d="M0 5q8-2 14 2l4 30L2 40z" fill="#ef6b2c" />
            <path d="M26 36h17v6q0 2-2 2H26z" fill="#f7841c" />
            <path d="M0 26l22 4 10 10-12 8H6q-4 0-4-4z" fill="#fb2257" />
            <path d="M9 9h30v30H9z" fill="#000" />
            <path d="M13 34.500h12" stroke="#fff" strokeWidth="2.200" />
          </Svg>
          <span className="absolute left-3 top-3 font-['Liberation_Mono'] text-[14px] font-bold leading-none text-white">IJ</span>
        </div>
      </Slot>
      <Slot w="w-[88px]" mark>
        <Svg w={34} h={44}>
          <path d="M17 0q8 6 9 16l-4 12-12-4Q6 10 17 0z" fill="#a685f0" />
          <path d="M20 4q8 6 8 14l5 9-7 16-3-16z" fill="#8f66de" />
          <path d="M4 19l9 7v14L0 30z" fill="#6231b4" />
          <path d="M12 27q8-4 12 2l3 15q-8-4-14-4z" fill="#6c3bc6" />
        </Svg>
      </Slot>
      <Slot w="w-[88px]" mark>
        <Chrome />
        <div className="absolute left-[46px] top-[12px] size-[33px] rounded-full bg-[radial-gradient(circle_at_50%_45%,#a08b84_0,#6b4a41_30%,#553a33_60%)]" />
      </Slot>
      <div className="relative ml-[6px] mt-[7px] flex h-[78px] w-[76px] justify-center rounded-lg border-2 border-[#cbcad6] bg-[#e4e2ec] pt-[13px]">
        <div className="size-[46px] rounded-full bg-black"><SiUnrealengine size={46} color="#fff" /></div>
        <div className="absolute bottom-0 h-1.5 w-8 rounded-full bg-[#0a6fd2]" />
      </div>
    </div>
    <div className="relative ml-auto flex h-full items-center">
      <Svg w={22} h={14}><path d="m1.500 12 9.500-9.500L20.500 12" stroke="#1a1a1a" strokeWidth="2.400" /></Svg>
      <Svg w={22} h={32} className="ml-[43px]">
        <rect x="6" y="1" width="10" height="20" rx="5" stroke="#0c4ba0" strokeWidth="2" />
        <path d="M1 14q0 12 10 12t10-12M11 26v6" stroke="#0c4ba0" strokeWidth="2.200" />
      </Svg>
      <Svg w={24} h={32} className="ml-[41px]"><path d="M1 32 12 1l11 31M4.500 21.500h15" stroke="#1a1a1a" strokeWidth="2" /></Svg>
      <Svg w={32} h={23} className="ml-[36px]">
        <path d="M1 10q15-17 30 0" stroke="#a9a8b3" strokeWidth="2.200" />
        <path d="M5 13.500q11-12 22 0M9.500 17q6.500-7 13 0" stroke="#1a1a1a" strokeWidth="2.200" />
        <circle cx="16" cy="19.500" r="3" fill="#1a1a1a" />
      </Svg>
      <Svg w={32} h={24} className="ml-[15px]">
        <path d="M1 8h5l8-7v22l-8-7H1z" stroke="#1a1a1a" strokeWidth="2" />
        <path d="m19 6 12 12M31 6 19 18" stroke="#1a1a1a" strokeWidth="1.800" />
      </Svg>
      <Svg w={33} h={26} className="-mt-2 ml-[16px]">
        <rect x="2" y="7" width="26" height="17" rx="3" stroke="#1a1a1a" strokeWidth="2" />
        <path d="M5 10h19v11H5z" fill="#1a1a1a" />
        <path d="M29 12h3v7h-3z" fill="#1a1a1a" />
        <path d="M7 0 1 9h5l-3 8 10-11H8l2-6z" fill="#1a1a1a" stroke="#d9d8e5" strokeWidth="1.400" />
      </Svg>
      <div className="-mt-[6px] ml-[31px] mr-px flex w-[126px] flex-col text-right leading-8">
        <span className="text-[25px]">오후 2:11</span>
        <span className="text-[24.300px]">2025-03-18</span>
      </div>
      <div className="flex h-full w-8 flex-col gap-[7px] pt-0.5 ml-[33px] mr-[21px]">
        <div className="flex size-8 items-center justify-center bg-[#3c3b41]">
          <Svg w={16} h={20}>
            <rect x="5" y="0" width="6" height="12" rx="3" fill="#fff" />
            <path d="M1.500 8q0 7 6.500 7t6.500-7M8 15v4" stroke="#fff" strokeWidth="1.800" />
          </Svg>
        </div>
        <div className="flex size-8 items-center justify-center bg-[#3c3b41]">
          <Svg w={22} h={22} className="relative z-10">
            <path d="M9 2.500A8.500 8.500 0 0 0 6 18.500M13 19.500A8.500 8.500 0 0 0 16 3.500" stroke="#fff" strokeWidth="2" />
            <path d="m8 0 4 3-4 3zM14 22l-4-3 4-3z" fill="#fff" />
            <circle cx="11" cy="11" r="3.200" fill="#fff" />
          </Svg>
        </div>
      </div>
      <Svg w={28} h={32} className="absolute right-[40px] top-[30px]">
        <path d="M3 15Q3 5 13 5h4v17h-1v4H0l3-4z" fill="#111" />
        <path d="M8 28q5 5 10 0z" fill="#111" />
        <path d="M9 12h6l-6 8h6" stroke="#d9d8e5" strokeWidth="2" />
        <path d="M18 5h7l-7 7h7" stroke="#111" strokeWidth="2.200" />
      </Svg>
    </div>
  </footer>
);

export default function App() {
  return (
    <div className="flex h-[1600px] w-[2560px] flex-col overflow-hidden bg-[#151515] font-['Roboto',sans-serif] text-[26.670px] leading-none tracking-[0.1px] text-[#c0c0c0]">
      <Title />
      <Toolbar />
      <PanelTabs />
      <div className="mt-0.5 flex h-[1176px] shrink-0">
        <LeftPanel />
        <Graph />
        <section className="ml-2.5 w-[631px] bg-[#242424]" />
      </div>
      <StatusBar />
      <Taskbar />
    </div>
  );
}
